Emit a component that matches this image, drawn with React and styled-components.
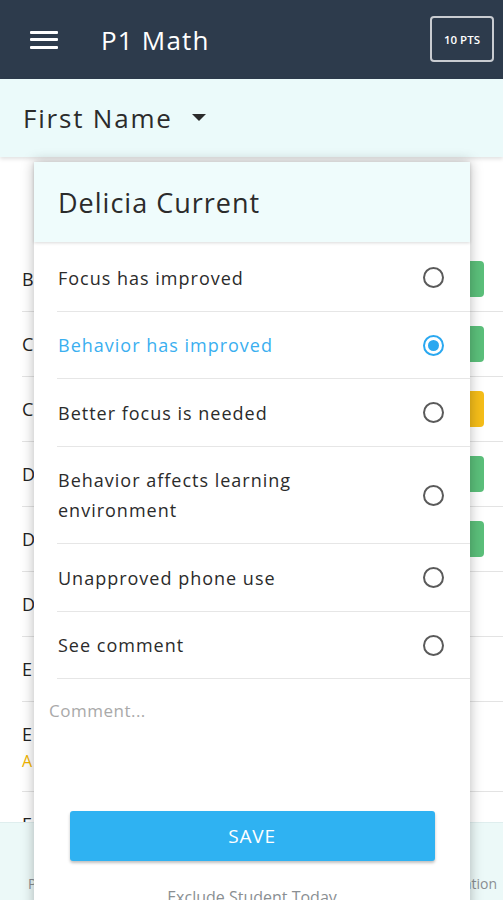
import React from 'react'
import styled, { createGlobalStyle } from 'styled-components'

const GlobalStyle = createGlobalStyle`
  html, body {
    margin: 0;
    padding: 0;
    background: #ffffff;
  }
  body {
    font-family: "Open Sans", "DejaVu Sans", sans-serif;
    color: #2b2b2b;
  }
  * { box-sizing: border-box; }
`

const rows = [
  { letter: 'B', badge: 'green' },
  { letter: 'C', badge: 'green' },
  { letter: 'C', badge: 'yellow' },
  { letter: 'D', badge: 'green' },
  { letter: 'D', badge: 'green' },
  { letter: 'D' },
  { letter: 'E' },
  { letter: 'E', note: 'A', tall: true },
  { letter: 'F' },
]

const options = [
  { label: 'Focus has improved' },
  { label: 'Behavior has improved', selected: true },
  { label: 'Better focus is needed' },
  { label: 'Behavior affects learning environment', wrap: true },
  { label: 'Unapproved phone use' },
  { label: 'See comment' },
]

export default function App() {
  return (
    <Page>
      <GlobalStyle />
      <TopBar>
        <Burger>
          <span />
          <span />
          <span />
        </Burger>
        <Title>P1 Math</Title>
        <Points>10 PTS</Points>
      </TopBar>
      <SortBar>
        <SortLabel>First Name</SortLabel>
        <Caret />
      </SortBar>
      <List>
        {rows.map((r, i) => (
          <Row key={i} tall={r.tall}>
            <RowText>
              <Name>{r.letter}</Name>
              {r.note && <Note>{r.note}</Note>}
            </RowText>
            {r.badge && <Badge color={r.badge} />}
          </Row>
        ))}
      </List>
      <BottomNav>
        <NavLabel>Points</NavLabel>
        <NavLabel>Participation</NavLabel>
      </BottomNav>

      <Dialog>
        <DialogHead>Delicia Current</DialogHead>
        <Options>
          {options.map((o, i) => (
            <Option key={i}>
              <OptionText selected={o.selected} wrap={o.wrap}>
                {o.label}
              </OptionText>
              <Radio selected={o.selected} />
            </Option>
          ))}
        </Options>
        <Comment placeholder="Comment..." />
        <SaveButton>SAVE</SaveButton>
        <Footnote>Exclude Student Today</Footnote>
      </Dialog>
    </Page>
  )
}

const Page = styled.div`
  position: relative;
  height: 900px;
  overflow: hidden;
  display: flex;
  flex-direction: column;
`

const TopBar = styled.header`
  height: 79px;
  flex-shrink: 0;
  background: #2d3b4c;
  display: flex;
  align-items: center;
  padding: 0 9px 0 30px;
`

const Burger = styled.div`
  width: 28px;
  display: flex;
  flex-direction: column;
  gap: 4.5px;
  span {
    display: block;
    height: 3px;
    background: #ffffff;
    border-radius: 1px;
  }
`

const Title = styled.h1`
  margin: 0 0 0 43px;
  font-size: 26px;
  font-weight: 500;
  color: #ffffff;
  letter-spacing: 1.2px;
  flex: 1;
`

const Points = styled.div`
  width: 64px;
  height: 46px;
  border: 2px solid #c9ccd1;
  border-radius: 4px;
  display: flex;
  align-items: center;
  justify-content: center;
  color: #ffffff;
  font-size: 11.5px;
  font-weight: 600;
  margin-top: -1px;
`

const SortBar = styled.div`
  height: 78px;
  flex-shrink: 0;
  background: #ebfafa;
  display: flex;
  align-items: center;
  padding-left: 23px;
  box-shadow: 0 2px 4px rgba(0, 0, 0, 0.12);
  position: relative;
  z-index: 1;
`

const SortLabel = styled.span`
  font-size: 26px;
  color: #2b2b2b;
  letter-spacing: 1.8px;
`

const Caret = styled.span`
  width: 0;
  height: 0;
  margin: 0 0 2px 19px;
  border-left: 7px solid transparent;
  border-right: 7px solid transparent;
  border-top: 7px solid #2b2b2b;
`

const List = styled.div`
  flex: 1;
  padding-top: 90px;
  background: #ffffff;
`

const Row = styled.div`
  height: ${p => (p.tall ? 90 : 65)}px;
  margin-left: 22px;
  padding-right: 19px;
  border-bottom: 1px solid #e3e3e3;
  display: flex;
  align-items: center;
  justify-content: space-between;
`

const RowText = styled.div`
  display: flex;
  flex-direction: column;
  gap: 4px;
`

const Name = styled.span`
  font-size: 18px;
  color: #222;
`

const Note = styled.span`
  font-size: 16px;
  color: #f0b400;
`

const Badge = styled.span`
  width: 44px;
  height: 36px;
  border-radius: 4px;
  background: ${p => (p.color === 'yellow' ? '#f5bd19' : '#5bbf7a')};
`

const BottomNav = styled.nav`
  position: absolute;
  left: 0;
  right: 0;
  bottom: 0;
  height: 78px;
  background: #ecf9f8;
  border-top: 1px solid #dfeeee;
  display: flex;
  align-items: flex-end;
  justify-content: space-between;
  padding: 0 6px 7px 28px;
`

const NavLabel = styled.span`
  font-size: 14px;
  color: #8a8f93;
`

const Dialog = styled.div`
  position: absolute;
  left: 34px;
  top: 162px;
  width: 436px;
  background: #ffffff;
  box-shadow: 0 0 12px rgba(0, 0, 0, 0.28);
  display: flex;
  flex-direction: column;
  z-index: 2;
`

const DialogHead = styled.div`
  height: 80px;
  background: #effcfc;
  display: flex;
  align-items: center;
  padding-left: 24px;
  font-size: 27px;
  color: #2b2b2b;
  letter-spacing: 1px;
  box-shadow: 0 1px 3px rgba(0, 0, 0, 0.15);
`

const Options = styled.div`
  display: flex;
  flex-direction: column;
  padding-top: 2px;
`

const Option = styled.div`
  margin-left: 23px;
  padding: 18.5px 26px 18px 1px;
  border-bottom: 1px solid #e6e6e6;
  display: flex;
  align-items: center;
  justify-content: space-between;
`

const OptionText = styled.span`
  font-size: 18px;
  line-height: 30px;
  letter-spacing: 1px;
  color: ${p => (p.selected ? '#3aaff0' : '#2b2b2b')};
  max-width: ${p => (p.wrap ? '260px' : 'none')};
`

const Radio = styled.span`
  width: 21px;
  height: 21px;
  border-radius: 50%;
  flex-shrink: 0;
  border: 2px solid ${p => (p.selected ? '#2aa8f0' : '#5a5a5a')};
  display: flex;
  align-items: center;
  justify-content: center;
  &::after {
    content: '';
    width: 11px;
    height: 11px;
    border-radius: 50%;
    background: ${p => (p.selected ? '#2aa8f0' : 'transparent')};
  }
`

const Comment = styled.textarea`
  border: none;
  outline: none;
  resize: none;
  height: 132px;
  padding: 20px 15px;
  font-family: "Open Sans", "DejaVu Sans", sans-serif;
  font-size: 17px;
  letter-spacing: 0.5px;
  color: #2b2b2b;
  &::placeholder {
    color: #a9a9a9;
  }
`

const SaveButton = styled.button`
  align-self: center;
  width: 365px;
  height: 50px;
  border: none;
  border-radius: 3px;
  background: #2fb2f2;
  color: #ffffff;
  font-family: "Open Sans", "DejaVu Sans", sans-serif;
  font-size: 19px;
  letter-spacing: 0.8px;
  box-shadow: 0 2px 3px rgba(0, 0, 0, 0.25);
`

const Footnote = styled.div`
  text-align: center;
  padding: 25px 0 12px;
  font-size: 16px;
  color: #8a8f93;
`
